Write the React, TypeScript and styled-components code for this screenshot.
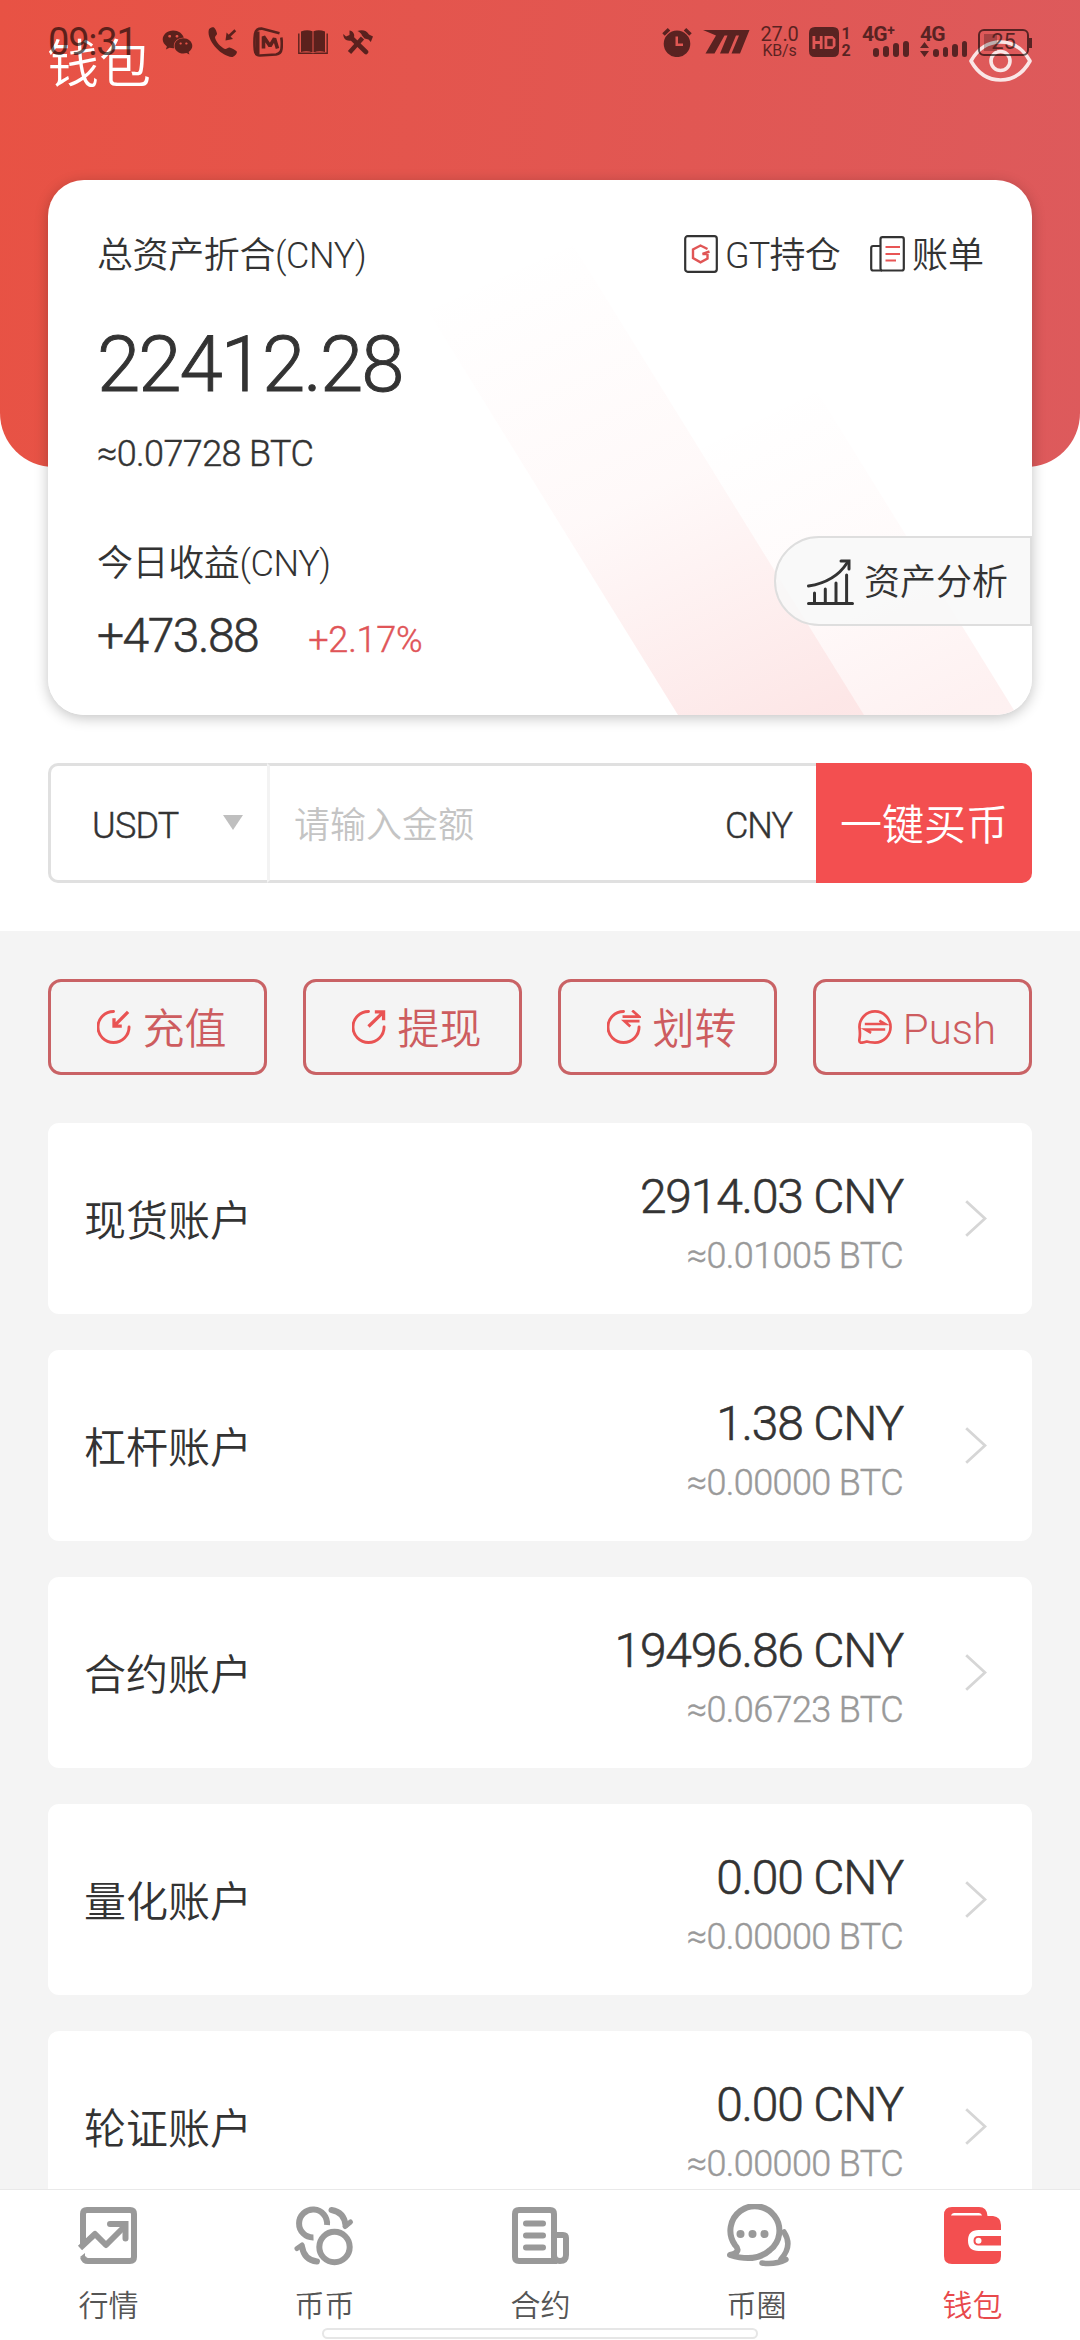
import React from "react";
import styled, { createGlobalStyle } from "styled-components";
import { FaWeixin } from "react-icons/fa";

const Global = createGlobalStyle`
  *, *::before, *::after { box-sizing: border-box; }
  body {
    margin: 0;
    background: #fff;
    font-family: Roboto, "Noto Sans CJK SC", sans-serif;
    font-weight: 350;
    color: #333;
  }
  svg { display: block; flex: none; }
`;

const Screen = styled.div`
  position: relative;
  display: flex;
  flex-direction: column;
  width: 1080px;
  height: 2340px;
  overflow: hidden;
  background: #fff;
`;

const Text = styled.span<{ $size: number; $line?: number; $gap?: number; $color?: string; $weight?: number }>`
  font-size: ${(p) => p.$size}px;
  line-height: ${(p) => p.$line ?? p.$size}px;
  letter-spacing: ${(p) => p.$gap ?? 0}px;
  color: ${(p) => p.$color ?? "inherit"};
  font-weight: ${(p) => p.$weight ?? 350};
  white-space: nowrap;
`;

/* Light numerals with a hairline stroke: a weight between Light and Regular. */
const Figures = styled(Text)`
  -webkit-text-stroke: 0.012em currentColor;
`;

/* ---------- status bar ---------- */

const StatusBar = styled.div`
  position: absolute;
  z-index: 3;
  top: 0;
  left: 0;
  display: flex;
  justify-content: space-between;
  align-items: center;
  width: 100%;
  height: 84px;
  padding: 0 48px;
  color: #000;
  opacity: 0.6;
`;

const StatusGroup = styled.div<{ $gap: number }>`
  display: flex;
  align-items: center;
  gap: ${(p) => p.$gap}px;
`;

const Clock = styled(Text)`
  width: 99px;
`;

const Stack = styled.div<{ $width: number }>`
  display: flex;
  flex-direction: column;
  align-items: center;
  gap: 4px;
  width: ${(p) => p.$width}px;
`;

const SignalBox = styled.div`
  display: flex;
  flex-direction: column;
  width: 47px;
  height: 30px;
`;

const SignalBars = styled.div`
  display: flex;
  justify-content: flex-end;
  align-items: flex-end;
  gap: 4px;
  height: 16px;
  margin-top: -1px;
`;

const Bar = styled.i<{ $h: number }>`
  width: 6px;
  height: ${(p) => p.$h}px;
  border-radius: 3px;
  background: currentColor;
`;

const Battery = styled.div`
  position: relative;
  display: flex;
  align-items: center;
  justify-content: center;
  width: 51px;
  height: 27px;
  margin-right: 3px;
  border: 2px solid currentColor;
  border-radius: 6px;
  background: linear-gradient(to right, rgba(0, 0, 0, 0.4) 13px, transparent 13px) 4px 3px / 43px 17px no-repeat;

  &::after {
    content: "";
    position: absolute;
    right: -5px;
    top: 7px;
    width: 3px;
    height: 10px;
    background: currentColor;
  }
`;

const PhoneIcon = () => (
  <svg width="30" height="30" viewBox="0 0 30 30" fill="currentColor">
    <path d="M1 2.200C2.600.6 5 0 6 .6c1.600 1.600 2.600 4 3 6 .2 1.400-2 2.400-2 4 .6 4 6 10 10 11.400 1.600.4 3-1.600 4.600-1.400 2.400.8 6 2.600 7.400 4.200 0 2-2 4.400-4.400 5.200C14 30.500-2.500 13 1 2.200Z" />
    <path d="M27.300 3.300 21 9.300" stroke="currentColor" strokeWidth="2.600" fill="none" />
    <path d="M17.500 13.500 18.600 5.600 25 12Z" />
  </svg>
);

const VideoIcon = () => (
  <svg width="30" height="30" viewBox="0 0 30 30" fill="none" stroke="currentColor">
    <path d="M26.500 6.200 8.500 1.600Q3 1.500 2 7Q1 14 1.800 23Q2 28.500 7 28.500L23 27.500Q28 26.500 28.500 22Q29.200 16 28.300 10.500" strokeWidth="2.600" />
    <path d="M4.500 4.500V27" strokeWidth="4" />
    <path d="M10.500 21.500V9.500L17 19L21.500 11.500L24.500 21.500" strokeWidth="3.600" strokeLinejoin="bevel" />
  </svg>
);

const BookIcon = () => (
  <svg width="30" height="24" viewBox="0 0 30 24" fill="currentColor">
    <path d="M3 1.500Q9-1 14.500 1.200V22.500Q9 20.500 3 22Z" />
    <path d="M27 1.500Q21-1 15.500 1.200V22.500Q21 20.500 27 22Z" />
    <path d="M.8 3.500V23.200H12.500Q15 24.500 17.500 23.200H29.200V3.500" fill="none" stroke="currentColor" strokeWidth="1.400" />
  </svg>
);

const ToolsIcon = () => (
  <svg width="30" height="25" viewBox="0 0 30 25" fill="none" stroke="currentColor">
    <path d="M8 7.500 23 22" strokeWidth="4.600" strokeLinecap="round" />
    <path d="M6.500.5 6.500 5 3 6.500.3 4C0 9 4 11.500 8 10.500L11 7.500C12 4 10 1 6.500.5Z" fill="currentColor" stroke="none" />
    <path d="M6.500 22.500 19.500 8" strokeWidth="4.400" />
    <path d="M14.500 1C19-.8 24 .5 26 4.500L30 6.500 27.800 12 25.500 9.500 21.500 8.500 19 5.500C18.500 3.500 16.500 2 14.500 1Z" fill="currentColor" stroke="none" />
  </svg>
);

const AlarmIcon = () => (
  <svg width="30" height="30" viewBox="0 0 30 30">
    <path fillRule="evenodd" fill="currentColor" d="M15 3.500a13.300 13.300 0 1 1 0 26.600a13.300 13.300 0 1 1 0-26.600ZM13.500 9.500V19H21V16.600H16V9.500Z" />
    <path d="M1.500 7.500 7 2.200M28.500 7.500 23 2.200" stroke="currentColor" strokeWidth="3.600" />
  </svg>
);

const SpeedIcon = () => (
  <svg width="47" height="24" viewBox="0 0 47 24" fill="currentColor">
    <path d="M0 0H46.500L37 23.500H28.500L36 5.500H33L25.500 23.500H17L24.500 5.500H21.500L11.500 23.500H2.500L13 5.500Z" />
  </svg>
);

const HdIcon = () => (
  <svg width="30" height="30" viewBox="0 0 30 30">
    <path fillRule="evenodd" fill="currentColor" d="M6 0H24Q30 0 30 6V24Q30 30 24 30H6Q0 30 0 24V6Q0 0 6 0ZM3.500 9V22H6.300V17H10.800V22H13.600V9H10.800V14H6.300V9ZM15.500 9V22H23.500L26.500 19V12L23.500 9ZM18.300 11.700H23.700V19.300H18.300Z" />
  </svg>
);

/* ---------- hero ---------- */

const Hero = styled.header`
  display: flex;
  flex-direction: column;
  flex: none;
  height: 467px;
  padding: 0 48px;
  border-radius: 0 0 54px 54px;
  background: linear-gradient(95deg, #e85244, #dd5a5c);
`;

const TitleRow = styled.div`
  display: flex;
  flex: none;
  justify-content: space-between;
  align-items: center;
  height: 180px;
  padding: 0 0 58px;
  color: #fff;
`;

const Title = styled(Text)`
  margin-left: -1px;
  padding-top: 9px;
`;

const AssetCard = styled.section`
  position: relative;
  z-index: 1;
  display: flex;
  flex-direction: column;
  height: 535px;
  padding: 56px 0 0 49px;
  overflow: hidden;
  border-radius: 36px;
  background: #fff;
`;

const CardShadow = styled.div`
  flex: none;
  border-radius: 36px;
  box-shadow: 0 3px 14px rgba(0, 0, 0, 0.24);
`;

const Stripes = styled.svg`
  position: absolute;
  z-index: -1;
  inset: 0;
`;

const CardTop = styled.div`
  display: flex;
  justify-content: space-between;
  align-items: center;
  height: 40px;
  padding-right: 48px;
`;

const CardLinks = styled.div`
  display: flex;
  gap: 30px;
`;

const CardLink = styled.span<{ $gap: number }>`
  display: flex;
  align-items: center;
  gap: ${(p) => p.$gap}px;

  svg { margin-top: -4px; }
`;

const Amount = styled(Figures)`
  margin-top: 49px;
`;

const AmountSub = styled(Figures)`
  margin-top: 29px;
`;

const CardBottom = styled.div`
  display: flex;
  justify-content: space-between;
  align-items: flex-start;
  margin-top: 62px;
`;

const Profit = styled.div`
  display: flex;
  flex-direction: column;
  gap: 27px;
  padding-top: 8px;
`;

const ProfitRow = styled.div`
  display: flex;
  align-items: baseline;
  gap: 50px;
`;

const AnalysisButton = styled.button`
  display: flex;
  align-items: center;
  gap: 10px;
  width: 258px;
  height: 90px;
  padding: 2px 0 0 31px;
  border: 2px solid #dedede;
  border-radius: 45px 0 0 45px;
  background: rgba(248, 248, 248, 0.88);
  color: #333;
  font-family: inherit;
`;

const AnalysisLabel = styled(Text)`
  padding-top: 2px;
`;

const EyeIcon = () => (
  <svg width="63" height="42" viewBox="0 0 63 42" fill="none" stroke="#fff" strokeOpacity="0.85" strokeWidth="3.600">
    <path d="M2 21C9 8.500 19 2 31.500 2S54 8.500 61 21C54 33.500 44 40 31.500 40S9 33.500 2 21Z" strokeLinejoin="round" />
    <circle cx="31.500" cy="21" r="9.500" />
  </svg>
);

const GtIcon = () => (
  <svg width="34" height="38" viewBox="0 0 34 38" fill="none">
    <rect x="1.200" y="1.200" width="31.600" height="35.600" rx="2.500" stroke="#333" strokeWidth="2.200" />
    <path d="M23.500 14 16.500 10.500 9 14.500V23L16.500 27.300 23.500 23.500V19H18.500L25.500 16.500" stroke="#e05555" strokeWidth="2.400" />
  </svg>
);

const BillIcon = () => (
  <svg width="35" height="36" viewBox="0 0 35 36" fill="none" stroke="#333" strokeWidth="2.200">
    <rect x="10.500" y="1.200" width="23.300" height="33.300" rx="2" />
    <path d="M10.500 10H3.200Q1.200 10 1.200 12V32.500Q1.200 34.500 3.200 34.500H12" />
    <path d="M15.500 11H30M15.500 18H30M15.500 24.500H26" stroke="#e85555" />
  </svg>
);

const ChartIcon = () => (
  <svg width="47" height="47" viewBox="0 0 47 47" fill="none" stroke="#333" strokeWidth="3" strokeLinecap="round" strokeLinejoin="round">
    <path d="M1.500 44.500H45.500M7.500 44V34M18.300 44V30M29 44V24M39.600 44V16" />
    <path d="M1.500 27C18 24.500 31 18 40 4" />
    <path d="M34 2H42V10" strokeLinejoin="miter" />
  </svg>
);

/* ---------- quick buy ---------- */

const BuyRow = styled.section`
  flex: none;
  display: flex;
  height: 120px;
  margin: 296px 48px 48px;
`;

const CoinSelect = styled.div`
  display: flex;
  align-items: center;
  justify-content: space-between;
  width: 219px;
  padding: 5px 24px 0 41px;
  border: 3px solid #e0e0e0;
  border-right: 0;
  border-radius: 10px 0 0 10px;
`;

const Caret = styled.i`
  width: 0;
  height: 0;
  margin-top: -6px;
  border: 10.5px solid transparent;
  border-top: 15px solid #bfbfbf;
  border-bottom: 0;
`;

const AmountField = styled.div`
  display: flex;
  flex: 1;
  align-items: center;
  justify-content: space-between;
  padding: 5px 24px 0;
  border: 3px solid #e0e0e0;
  border-left-color: #f3f3f3;
  border-right: 0;
`;

const BuyButton = styled.button`
  width: 216px;
  padding: 6px 0 0;
  border: 0;
  border-radius: 0 10px 10px 0;
  background: #f34f50;
  color: #fff;
  font-family: inherit;
`;

/* ---------- accounts ---------- */

const Body = styled.main`
  display: flex;
  flex: 1;
  flex-direction: column;
  gap: 36px;
  min-height: 0;
  padding: 48px 48px 0;
  overflow: hidden;
  background: #f4f4f4;
`;

const Actions = styled.div`
  display: grid;
  flex: none;
  grid-template-columns: repeat(4, 1fr);
  gap: 36px;
  margin-bottom: 12px;
`;

const ActionButton = styled.button`
  display: flex;
  align-items: center;
  justify-content: center;
  gap: 11px;
  height: 96px;
  padding: 0 0 0 9px;
  border: 3px solid #c96265;
  border-radius: 13px;
  background: transparent;
  color: #cd5c5f;
  font-family: inherit;
`;

const ActionLabel = styled(Text)`
  padding-top: 6px;
`;

const AccountCard = styled.article`
  flex: none;
  display: flex;
  align-items: center;
  height: 191px;
  padding: 0 45px 0 36px;
  border-radius: 11px;
  background: #fff;
`;

const AccountName = styled(Text)`
  padding-top: 6px;
`;

const Balance = styled.div`
  display: flex;
  flex: 1;
  flex-direction: column;
  align-items: flex-end;
  gap: 15px;
  margin-right: 62px;
  padding-top: 11px;
`;

const icon = { width: 34, height: 34, viewBox: "1 1 35 35", fill: "none", stroke: "#e95353", strokeWidth: 3, strokeLinecap: "round" as const };

const DepositIcon = () => (
  <svg {...icon}>
    <path d="M18 2.500A16 16 0 1 0 34 18.500" />
    <path d="M33 3 19 17M18.500 9.500V17.500H26.500" strokeLinecap="butt" strokeWidth="3.400" />
  </svg>
);
const WithdrawIcon = () => (
  <svg {...icon}>
    <path d="M18 2.500A16 16 0 1 0 34 18.500" />
    <path d="M18 18 33 3.500M24.500 3H33.500V11.500" strokeLinecap="butt" strokeWidth="3.400" />
  </svg>
);
const TransferIcon = () => (
  <svg {...icon}>
    <path d="M18 2.500A16 16 0 1 0 34 18.500" />
    <path d="M17 7.800H34L27 1.500M34.500 12.500H19L25 18" strokeLinecap="butt" strokeWidth="2.800" />
  </svg>
);
const PushIcon = () => (
  <svg {...icon}>
    <path d="M2.500 18.500A16 16 0 1 1 18.500 34.500Q13 34.500 10 33.500Q6 35 3.500 34.500Q2 34 2.500 31Q3.500 26 2.500 18.500Z" strokeWidth="2.800" />
    <path d="M8 15.500H29L23 12M29 21H8.500L14.500 24.500" strokeLinecap="butt" strokeWidth="2.600" />
  </svg>
);

const Chevron = () => (
  <svg width="22" height="37" viewBox="0 0 22 37" fill="none" stroke="#d6d6d6" strokeWidth="2.800">
    <path d="M1.200 1.200 20 18.500 1.200 35.800" />
  </svg>
);

/* ---------- tab bar ---------- */

const TabBar = styled.nav`
  position: relative;
  flex: none;
  display: grid;
  grid-template-columns: repeat(5, 1fr);
  height: 151px;
  border-top: 1px solid #e9e9e9;
  background: #fff;
`;

const Tab = styled.div<{ $active?: boolean }>`
  display: flex;
  flex-direction: column;
  align-items: center;
  gap: 23px;
  padding: 14px 0 0 1px;
  color: ${(p) => (p.$active ? "#e8494c" : "#555")};
`;

const HomeIndicator = styled.i`
  position: absolute;
  left: 322px;
  bottom: 1px;
  width: 436px;
  height: 11px;
  border: 2px solid #e6e6e6;
  border-radius: 6px;
  background: #fff;
`;

const tabSvg = { width: 68, height: 64, viewBox: "0 0 68 64", fill: "none", stroke: "#999", strokeWidth: 6, strokeLinecap: "round" as const };

const MarketIcon = () => (
  <svg {...tabSvg}>
    <path d="M8 41V10Q8 6 12 6H55Q59 6 59 10V53Q59 57 55 57H13Q9 57 8 53" strokeLinecap="butt" />
    <path d="M5 44 20 30 31 41 51 21" strokeLinecap="butt" strokeLinejoin="round" />
    <path d="M35 20H50.500V34.500" />
    <path d="M5 53 10 49V56Z" fill="#999" stroke="none" />
  </svg>
);
const SwapIcon = () => (
  <svg {...tabSvg}>
    <g strokeLinecap="butt">
      <path d="M36 21A14 14 0 1 0 22.500 33.500" />
      <circle cx="43.500" cy="43" r="15.200" />
    </g>
    <path d="M40.500 6Q53 8 54.500 21" />
    <path d="M54 22.500 59.500 18" strokeWidth="5" />
    <path d="M26 57.500Q13 56 11 42.500" />
    <path d="M11 41 6 44.500" strokeWidth="5" />
  </svg>
);
const ContractIcon = () => (
  <svg {...tabSvg}>
    <path d="M12 6H43Q47 6 47 10V57H12Q8 57 8 53V10Q8 6 12 6Z" />
    <path d="M47 31H56Q59 31 59 34V51Q59 57 53 57Q47 57 47 51" />
    <path d="M19 19.500H36M19 31.500H36M19 43.500H36" />
  </svg>
);
const ChatIcon = () => (
  <svg {...tabSvg}>
    <path d="M7 51C16 49 16 45 12 41A24.500 24.500 0 1 1 47 46Q33 59 7 51Z" strokeLinejoin="round" />
    <path d="M61 28Q70 42 58 55Q61 56 63 55.500Q52 61 39 59" strokeLinejoin="round" strokeWidth="5.500" />
    <g fill="#999" stroke="none">
      <circle cx="17.500" cy="30" r="4" />
      <circle cx="29.500" cy="30" r="4" />
      <circle cx="41.500" cy="30" r="4" />
    </g>
  </svg>
);
const WalletIcon = () => (
  <svg {...tabSvg} stroke="none">
    <path
      fill="#f34f50"
      fillRule="evenodd"
      d="M13 3H40Q48 3 48.500 12H54Q62 13 62 21V26H39.500Q29 26 29 36.500T39.500 47H62V52Q62 60 54 60H13Q5 60 5 52V11Q5 3 13 3ZM12 11.500H43Q42.500 9 40 9H15Q12.500 9 12 11.500ZM62 32V41.500H39.500Q34.500 41.500 34.500 36.700T39.500 32ZM39.500 33.700A3 3 0 1 0 39.500 39.700A3 3 0 1 0 39.500 33.700Z"
    />
  </svg>
);

const accounts = [
  { name: "现货账户", cny: "2914.03 CNY", btc: "≈0.01005 BTC" },
  { name: "杠杆账户", cny: "1.38 CNY", btc: "≈0.00000 BTC" },
  { name: "合约账户", cny: "19496.86 CNY", btc: "≈0.06723 BTC" },
  { name: "量化账户", cny: "0.00 CNY", btc: "≈0.00000 BTC" },
  { name: "轮证账户", cny: "0.00 CNY", btc: "≈0.00000 BTC" },
];

const actions = [
  { label: "充值", Icon: DepositIcon },
  { label: "提现", Icon: WithdrawIcon },
  { label: "划转", Icon: TransferIcon },
  { label: "Push", Icon: PushIcon },
];

const tabs = [
  { label: "行情", Icon: MarketIcon },
  { label: "币币", Icon: SwapIcon },
  { label: "合约", Icon: ContractIcon },
  { label: "币圈", Icon: ChatIcon },
  { label: "钱包", Icon: WalletIcon, active: true },
];

export default function App() {
  return (
    <Screen>
      <Global />
      <StatusBar>
        <StatusGroup $gap={15}>
          <Clock $size={38} $gap={-1.2} $weight={400}>09:31</Clock>
          <FaWeixin size={31} />
          <PhoneIcon />
          <VideoIcon />
          <BookIcon />
          <ToolsIcon />
        </StatusGroup>
        <StatusGroup $gap={11}>
          <AlarmIcon />
          <SpeedIcon />
          <Stack $width={37}>
            <Text $size={20} $line={14} $gap={-0.3} $weight={400}>27.0</Text>
            <Text $size={16} $line={12} $gap={-0.2} $weight={400}>KB/s</Text>
          </Stack>
          <StatusGroup $gap={2}>
            <HdIcon />
            <Stack $width={10}>
              <Text $size={16} $line={13} $weight={700}>1</Text>
              <Text $size={16} $line={13} $weight={700}>2</Text>
            </Stack>
          </StatusGroup>
          <SignalBox>
            <Text $size={21} $line={15} $gap={-0.8} $weight={700}>4G⁺</Text>
            <SignalBars>
              <Bar $h={9} />
              <Bar $h={11} />
              <Bar $h={14} />
              <Bar $h={16} />
            </SignalBars>
          </SignalBox>
          <SignalBox>
            <Text $size={21} $line={15} $gap={-0.8} $weight={700}>4G</Text>
            <SignalBars>
              <svg width="9" height="15" viewBox="0 0 9 15" fill="currentColor">
                <path d="M0 6 4.500 0 9 6ZM0 9H9L4.500 15Z" />
              </svg>
              <Bar $h={8} />
              <Bar $h={10} />
              <Bar $h={13} />
              <Bar $h={16} />
            </SignalBars>
          </SignalBox>
          <Battery>
            <Text $size={22} $weight={400}>25</Text>
          </Battery>
        </StatusGroup>
      </StatusBar>

      <Hero>
        <TitleRow>
          <Title $size={52}>钱包</Title>
          <EyeIcon />
        </TitleRow>
        <CardShadow>
          <AssetCard>
            <Stripes width="984" height="535" viewBox="0 0 984 535">
              <defs>
                <linearGradient id="wide" gradientUnits="userSpaceOnUse" x1="500" y1="60" x2="724" y2="555">
                  <stop offset="0" stopColor="#f04f50" stopOpacity="0" />
                  <stop offset="0.5" stopColor="#f04f50" stopOpacity="0.035" />
                  <stop offset="1" stopColor="#f04f50" stopOpacity="0.14" />
                </linearGradient>
                <linearGradient id="narrow" gradientUnits="userSpaceOnUse" x1="720" y1="220" x2="880" y2="545">
                  <stop offset="0" stopColor="#f04f50" stopOpacity="0" />
                  <stop offset="0.5" stopColor="#f04f50" stopOpacity="0.025" />
                  <stop offset="1" stopColor="#f04f50" stopOpacity="0.08" />
                </linearGradient>
              </defs>
              <path d="M630 535 336 60 522 60 816 535Z" fill="url(#wide)" />
              <path d="M816 535 609 200 762 200 969 535Z" fill="url(#narrow)" />
            </Stripes>
            <CardTop>
              <Text $size={36} $line={40} $gap={-0.4}>总资产折合(CNY)</Text>
              <CardLinks>
                <CardLink $gap={7}>
                  <GtIcon />
                  <Text $size={36} $line={40} $gap={-0.8}>GT持仓</Text>
                </CardLink>
                <CardLink $gap={7}>
                  <BillIcon />
                  <Text $size={36} $line={40}>账单</Text>
                </CardLink>
              </CardLinks>
            </CardTop>
            <Amount $size={78} $line={80} $gap={-2}>22412.28</Amount>
            <AmountSub $size={36} $line={40} $gap={-0.6}>≈0.07728 BTC</AmountSub>
            <CardBottom>
              <Profit>
                <Text $size={36} $line={40} $gap={-0.4}>今日收益(CNY)</Text>
                <ProfitRow>
                  <Figures $size={48} $line={50} $gap={-1.5}>+473.88</Figures>
                  <Figures $size={36} $line={50} $gap={-0.2} $color="#e05558">+2.17%</Figures>
                </ProfitRow>
              </Profit>
              <AnalysisButton>
                <ChartIcon />
                <AnalysisLabel $size={36} $line={40}>资产分析</AnalysisLabel>
              </AnalysisButton>
            </CardBottom>
          </AssetCard>
        </CardShadow>
      </Hero>

      <BuyRow>
        <CoinSelect>
          <Figures $size={36} $gap={-0.8}>USDT</Figures>
          <Caret />
        </CoinSelect>
        <AmountField>
          <Text $size={36} $color="#c4c4c4">请输入金额</Text>
          <Figures $size={36} $gap={-1}>CNY</Figures>
        </AmountField>
        <BuyButton>
          <Text $size={42}>一键买币</Text>
        </BuyButton>
      </BuyRow>

      <Body>
        <Actions>
          {actions.map(({ label, Icon }) => (
            <ActionButton key={label}>
              <Icon />
              <ActionLabel $size={42}>{label}</ActionLabel>
            </ActionButton>
          ))}
        </Actions>
        {accounts.map((a) => (
          <AccountCard key={a.name}>
            <AccountName $size={42}>{a.name}</AccountName>
            <Balance>
              <Figures $size={48} $line={48} $gap={-1.2}>{a.cny}</Figures>
              <Figures $size={36} $line={40} $gap={-0.6} $color="#999">{a.btc}</Figures>
            </Balance>
            <Chevron />
          </AccountCard>
        ))}
      </Body>

      <TabBar>
        {tabs.map(({ label, Icon, active }) => (
          <Tab key={label} $active={active}>
            <Icon />
            <Text $size={30}>{label}</Text>
          </Tab>
        ))}
        <HomeIndicator />
      </TabBar>
    </Screen>
  );
}
